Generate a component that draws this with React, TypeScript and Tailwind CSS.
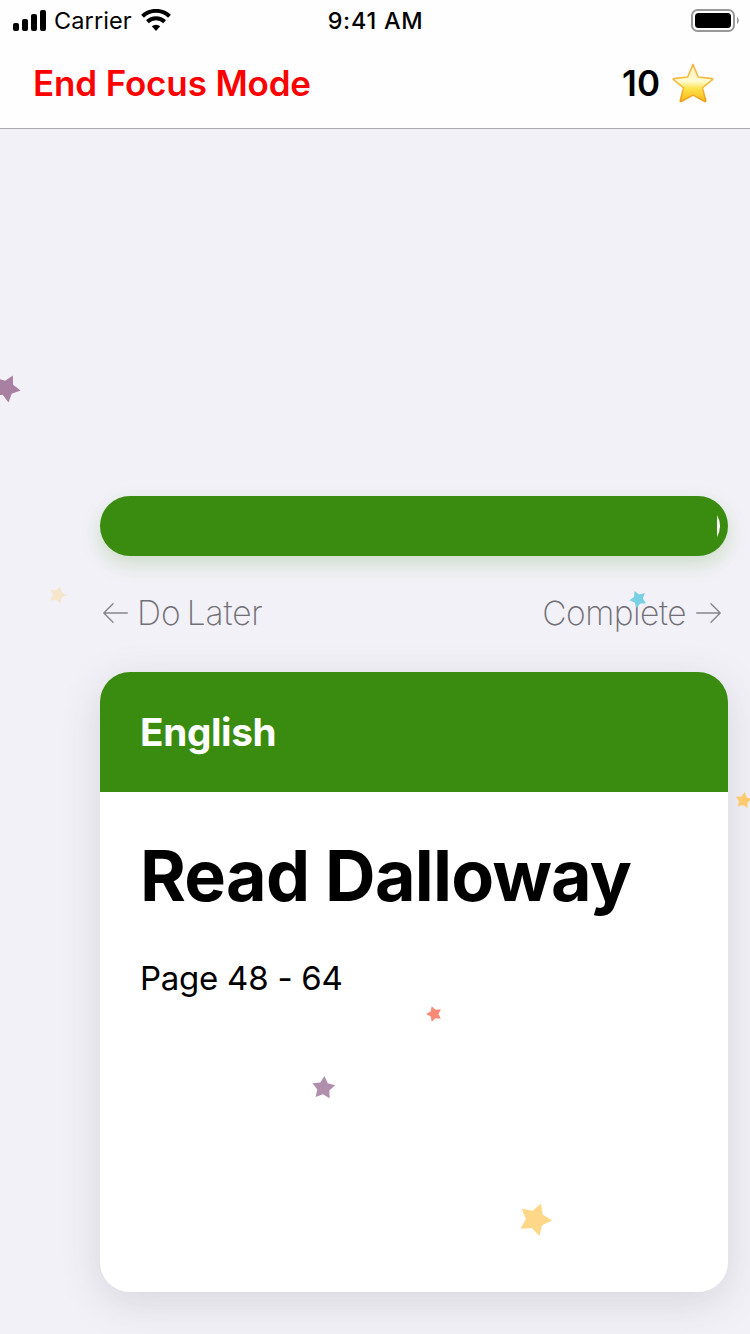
const tip = (cx: number, cy: number, r: number, deg: number, inner: number) =>
  Array.from({ length: 10 }, (_, i) => {
    const a = ((deg + i * 36) * Math.PI) / 180;
    const d = i % 2 ? r * inner : r;
    return `${(cx + d * Math.cos(a)).toFixed(2)},${(cy + d * Math.sin(a)).toFixed(2)}`;
  }).join(" ");

const confetti = [
  { x: 6.3, y: 388.3, r: 14.4, deg: 9, color: "#a780a2" },
  { x: 57.7, y: 595, r: 9.2, deg: 0, color: "#f5e6cb" },
  { x: 638.2, y: 599.2, r: 9, deg: 173, color: "#79d0e4" },
  { x: 743.5, y: 800.5, r: 8.5, deg: -82, color: "#fdca6e" },
  { x: 434.2, y: 1014, r: 8.2, deg: 180, color: "#f98a75" },
  { x: 323.5, y: 1088, r: 12, deg: -85, color: "#b08fac" },
  { x: 535, y: 1219.5, r: 17.2, deg: 3, color: "#ffd788" },
];

function Signal() {
  return (
    <svg width="33" height="21" viewBox="0 0 33 21" fill="black">
      <rect x="0" y="13" width="6" height="8" rx="2" />
      <rect x="9" y="9" width="6" height="12" rx="2" />
      <rect x="18" y="4" width="6" height="17" rx="2" />
      <rect x="27" y="0" width="6" height="21" rx="2" />
    </svg>
  );
}

function Wifi() {
  return (
    <svg width="30" height="22" viewBox="0 0 30 22" fill="none" stroke="black">
      <path d="M1.5 7.300A19.500 19.500 0 0 1 28.500 7.300" strokeWidth="4" />
      <path d="M6.400 12.700A12.300 12.300 0 0 1 23.600 12.700" strokeWidth="4" />
      <path d="M15 22L10.800 17.300A6.200 6.200 0 0 1 19.200 17.300Z" fill="black" stroke="none" />
    </svg>
  );
}

function Battery() {
  return (
    <svg width="50" height="24" viewBox="0 0 50 24">
      <rect x="2" y="1" width="42" height="21" rx="5.5" fill="none" stroke="#999" strokeWidth="2" />
      <rect x="5" y="4" width="36" height="15" rx="3.5" fill="black" />
      <path d="M47 8C49.400 9.400 49.400 13.600 47 15Z" fill="#999" />
    </svg>
  );
}

function GoldStar() {
  return (
    <svg width="44" height="42" viewBox="0 0 44 42">
      <defs>
        <linearGradient id="gold" x1="0" y1="0" x2="0" y2="1">
          <stop offset="0" stopColor="#fdeeb0" />
          <stop offset="0.45" stopColor="#fffbd2" />
          <stop offset="0.65" stopColor="#fde34e" />
          <stop offset="1" stopColor="#fbb817" />
        </linearGradient>
        <linearGradient id="rim" x1="0" y1="0" x2="0" y2="1">
          <stop offset="0" stopColor="#efb54f" />
          <stop offset="0.6" stopColor="#f6bd3c" />
          <stop offset="1" stopColor="#ee9c1c" />
        </linearGradient>
      </defs>
      <path
        d="M22 2.500L27.300 15L41.300 16.600Q42.200 17 41.500 17.700L31.400 25.800L34.700 38.500Q34.800 40 33.400 39.300L22 33.100L10.600 39.300Q9.200 40 9.300 38.500L12.600 25.800L2.500 17.700Q1.800 17 2.700 16.600L16.700 15Z"
        fill="url(#gold)"
        stroke="url(#rim)"
        strokeWidth="1.6"
        strokeLinejoin="round"
      />
    </svg>
  );
}

function Arrow({ flip = false }: { flip?: boolean }) {
  return (
    <svg
      width="25"
      height="20"
      viewBox="0 0 25 20"
      fill="none"
      stroke="#85858b"
      strokeWidth="1.4"
      strokeLinecap="round"
      strokeLinejoin="round"
      className={flip ? "mb-[2px] rotate-180" : "mb-[2px]"}
    >
      <path d="M24.300 10H0.800M10 0.800L0.800 10L10 19.200" />
    </svg>
  );
}

export default function App() {
  return (
    <div className="relative flex h-[1334px] w-[750px] flex-col overflow-hidden bg-[#f2f1f7] font-['Inter',sans-serif] text-black">
      <header className="h-[129px] shrink-0 border-b border-[#a9a9ae] bg-[#fefefe]">
        <div className="grid h-[41px] grid-cols-[1fr_120px_1fr] items-center pr-[10px] pl-[13px]">
          <div className="flex items-center">
            <Signal />
            <span className="mr-[9px] ml-[8px] text-[23.5px] leading-none tracking-[0.1px]">Carrier</span>
            <div className="mb-[1px]">
              <Wifi />
            </div>
          </div>
          <span className="-ml-[2px] pt-[1px] text-center text-[23.4px] leading-none font-medium tracking-[0.75px] whitespace-nowrap">
            9:41 AM
          </span>
          <div className="flex justify-end">
            <Battery />
          </div>
        </div>
        <div className="flex h-[84px] items-center justify-between pr-[35px] pl-[33px] text-[35px] leading-none font-semibold">
          <button className="tracking-[-0.15px] text-[#ff0000]">End Focus Mode</button>
          <div className="flex items-center gap-[11px]">
            <span>10</span>
            <GoldStar />
          </div>
        </div>
      </header>

      <main className="mt-[367px] ml-[100px] w-[628px]">
        <div className="flex h-[60px] items-center justify-end rounded-[30px] bg-[#398c0f] pr-[8px] shadow-[0_8px_20px_rgba(57,140,15,0.2)]">
          <svg width="3" height="24" viewBox="0 0 3 24">
            <path d="M0 1Q6 12 0 23Z" fill="white" />
          </svg>
        </div>

        <div className="flex h-[116px] items-center justify-between pr-[7px] pl-[3px] text-[33.5px] leading-none font-extralight text-[#6f6f75]">
          <div className="flex items-center gap-[9px]">
            <Arrow />
            <span className="tracking-[-0.1px] [word-spacing:-3px]">Do Later</span>
          </div>
          <div className="flex items-center gap-[10px]">
            <span className="tracking-[-0.5px]">Complete</span>
            <Arrow flip />
          </div>
        </div>

        <article className="h-[620px] overflow-hidden rounded-[30px] bg-white shadow-[0_10px_40px_rgba(60,60,80,0.15)]">
          <div className="flex h-[120px] items-center bg-[#398c0f] px-[40px]">
            <h2 className="text-[38.7px] leading-none font-bold tracking-[-0.35px] text-white">English</h2>
          </div>
          <div className="px-[40px] pt-[48px]">
            <h1 className="text-[70px] leading-[72px] font-bold tracking-[-0.75px] whitespace-nowrap">Read Dalloway</h1>
            <p className="mt-[46px] text-[33px] leading-[40px] tracking-[-0.25px]">Page 48 - 64</p>
          </div>
        </article>
      </main>

      <svg className="pointer-events-none absolute inset-0" width="750" height="1334" viewBox="0 0 750 1334">
        {confetti.map((s) => (
          <polygon key={s.y} points={tip(s.x, s.y, s.r, s.deg, 0.53)} fill={s.color} />
        ))}
      </svg>
    </div>
  );
}
